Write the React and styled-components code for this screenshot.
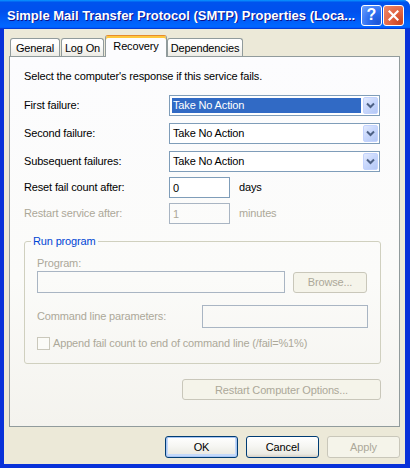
import React from 'react';
import styled, { createGlobalStyle, css } from 'styled-components';

const Global = createGlobalStyle`
  html, body { margin: 0; padding: 0; background: #ffffff; }
  body {
    width: 410px; height: 468px; overflow: hidden;
    font-family: "Liberation Sans", Arial, sans-serif;
    font-size: 11px; letter-spacing: -0.15px; color: #000;
  }
  * { box-sizing: border-box; }
`;

const Window = styled.div`
  width: 410px; height: 468px;
  display: flex; flex-direction: column;
  background: #0831d9;
  border-radius: 0 7px 0 0;
  overflow: hidden;
`;

const TitleBar = styled.div`
  height: 29px; flex: none;
  display: flex; align-items: center;
  padding: 0 6px 0 7px;
  background: linear-gradient(180deg, #0997ff, #0053ee 8%, #0050ee 40%, #06f 88%, #06f 93%, #005bff 95%, #003dd7 96%, #003dd7);
`;

const Title = styled.div`
  flex: 1; white-space: nowrap; overflow: hidden;
  font-weight: bold; font-size: 13px; letter-spacing: 0;
  color: #fff; text-shadow: 1px 1px #0f1089;
  padding-top: 1px;
`;

const TitleButtons = styled.div`
  display: flex; gap: 1px; margin-top: 1px;
`;

const TitleButton = styled.div`
  width: 21px; height: 21px;
  border: 1px solid #fff; border-radius: 3px;
  display: flex; align-items: center; justify-content: center;
  color: #fff; font-weight: bold; font-size: 16px; letter-spacing: 0;
  ${p => p.$kind === 'close' ? css`
    background: radial-gradient(circle at 85% 85%, #cc4622 0%, #e0603d 40%, #ec8a6c 100%);
  ` : css`
    background: radial-gradient(circle at 85% 85%, #1c55d8 0%, #2d6ef0 45%, #6fa3ff 100%);
  `}
`;

const Body = styled.div`
  flex: 1;
  display: flex; flex-direction: column;
  background: #ece9d8;
  margin: 0 5px 4px 4px;
  padding: 6px 5px 6px 5px;
`;

const TabStrip = styled.div`
  height: 21px; flex: none;
  display: flex; align-items: flex-end;
  padding-left: 1px;
  position: relative; z-index: 1;
`;

const Tab = styled.div`
  width: ${p => p.$w}px;
  height: 18px;
  margin-right: 1px;
  border: 1px solid #919b9c; border-bottom: none;
  border-radius: 3px 3px 0 0;
  background: linear-gradient(180deg, #ffffff 0%, #fefefd 30%, #ecebe5 100%);
  display: flex; align-items: center; justify-content: center;
  padding-top: 1px;
  ${p => p.$active && css`
    height: 22px;
    margin-right: 0;
    margin-bottom: -1px;
    background: #fcfcfe;
    border-top: 1px solid #e68b2c;
    box-shadow: inset 0 2px 0 #ffc73c;
    align-items: flex-start;
    padding-top: 4px;
  `}
`;

const Panel = styled.div`
  flex: 1;
  display: flex; flex-direction: column;
  border: 1px solid #919b9c;
  background: linear-gradient(180deg, #fcfcfe 0%, #fbfbf9 60%, #f4f3ee 100%);
  padding: 13px 18px 0 14px;
`;

const Text = styled.div`
  line-height: 13px;
  white-space: nowrap;
  color: ${p => p.$disabled ? '#aca899' : '#000'};
`;

const Row = styled.div`
  display: flex; align-items: center;
  margin-top: ${p => p.$mt || 0}px;
`;

const RowLabel = styled(Text)`
  width: ${p => p.$w || 145}px; flex: none;
`;

const Combo = styled.div`
  width: 211px; height: 21px;
  border: 1px solid #7f9db9; background: #fff;
  display: flex; align-items: center;
  padding: 1px;
`;

const ComboValue = styled.div`
  flex: 1; height: 15px;
  margin: 0 2px 0 1px;
  padding-left: 1px;
  line-height: 15px;
  ${p => p.$selected ? css`
    background: #316ac5; color: #fff;
  ` : css`
    color: #000;
  `}
`;

const ComboButton = styled.div`
  width: 15px; height: 17px; flex: none;
  border: 1px solid #c3d3fd; border-radius: 2px;
  background: linear-gradient(135deg, #e3ebfe 0%, #c9d8fc 45%, #b4c8f6 100%);
  display: flex; align-items: center; justify-content: center;
`;

const TextBox = styled.div`
  width: ${p => p.$w}px; height: ${p => p.$h || 21}px; flex: none;
  border: 1px solid ${p => p.$disabled ? '#a9b5c3' : '#7f9db9'};
  background: ${p => p.$disabled ? 'transparent' : '#fff'};
  color: ${p => p.$disabled ? '#aca899' : '#000'};
  padding: 0 3px;
  display: flex; align-items: center;
`;

const Unit = styled(Text)`
  margin-left: 9px;
`;

const Group = styled.fieldset`
  margin: 10px 0 0 0;
  padding: 0;
  min-inline-size: 0;
  border: 1px solid #d0d0bf;
  border-radius: 3px;
`;

const Legend = styled.legend`
  margin-left: 6px;
  padding: 0 2px;
  line-height: 14px;
  color: #0046d5;
`;

const GroupInner = styled.div`
  display: flex; flex-direction: column;
  padding: 9px 12px 13px 12px;
`;

const Button = styled.div`
  width: ${p => p.$w}px; height: ${p => p.$h || 22}px; flex: none;
  border-radius: 3px;
  display: flex; align-items: center; justify-content: center;
  white-space: nowrap;
  ${p => p.$disabled ? css`
    border: 1px solid #c9c7ba;
    background: #f5f4ea;
    color: #aca899;
  ` : css`
    border: 1px solid #003c74;
    background: linear-gradient(180deg, #ffffff 0%, #f6f6f3 45%, #ebeae3 85%, #d6d0c5 100%);
    color: #000;
  `}
  ${p => p.$default && css`
    box-shadow: inset 0 0 0 1px #a8c6f3, inset 0 -1px 0 2px #c4d9fa;
  `}
`;

const Check = styled.div`
  width: 13px; height: 13px; flex: none;
  border: 1px solid #cac8bb;
  background: #fbfbf7;
  margin-right: 3px;
`;

const SideButton = styled(Button)`
  align-self: flex-end;
  margin-top: 15px;
`;

const Footer = styled.div`
  display: flex; justify-content: flex-end; gap: 8px;
  margin-top: 9px;
`;

const Chevron = () => (
  <svg width="9" height="7" viewBox="0 0 9 7">
    <path d="M1 1.5 L4.5 5 L8 1.5" fill="none" stroke="#4d6185" strokeWidth="2" />
  </svg>
);

const CloseX = () => (
  <svg width="11" height="11" viewBox="0 0 11 11">
    <path d="M1.5 1.5 L9.5 9.5 M9.5 1.5 L1.5 9.5" stroke="#fff" strokeWidth="2.2" strokeLinecap="square" />
  </svg>
);

const ComboField = ({ value, selected }) => (
  <Combo>
    <ComboValue $selected={selected}>{value}</ComboValue>
    <ComboButton><Chevron /></ComboButton>
  </Combo>
);

export default function App() {
  return (
    <>
      <Global />
      <Window>
        <TitleBar>
          <Title>Simple Mail Transfer Protocol (SMTP) Properties (Loca...</Title>
          <TitleButtons>
            <TitleButton $kind="help">?</TitleButton>
            <TitleButton $kind="close"><CloseX /></TitleButton>
          </TitleButtons>
        </TitleBar>
        <Body>
          <TabStrip>
            <Tab $w={50}>General</Tab>
            <Tab $w={43}>Log On</Tab>
            <Tab $w={62} $active>Recovery</Tab>
            <Tab $w={76}>Dependencies</Tab>
          </TabStrip>
          <Panel>
            <Text>Select the computer's response if this service fails.</Text>
            <Row $mt={12}>
              <RowLabel>First failure:</RowLabel>
              <ComboField value="Take No Action" selected />
            </Row>
            <Row $mt={7}>
              <RowLabel>Second failure:</RowLabel>
              <ComboField value="Take No Action" />
            </Row>
            <Row $mt={7}>
              <RowLabel>Subsequent failures:</RowLabel>
              <ComboField value="Take No Action" />
            </Row>
            <Row $mt={5}>
              <RowLabel>Reset fail count after:</RowLabel>
              <TextBox $w={61}>0</TextBox>
              <Unit>days</Unit>
            </Row>
            <Row $mt={5}>
              <RowLabel $disabled>Restart service after:</RowLabel>
              <TextBox $w={61} $disabled>1</TextBox>
              <Unit $disabled>minutes</Unit>
            </Row>
            <Group>
              <Legend>Run program</Legend>
              <GroupInner>
                <Text $disabled>Program:</Text>
                <Row $mt={1}>
                  <TextBox $w={248} $h={22} $disabled />
                  <Button $w={74} $h={21} $disabled style={{ marginLeft: 8 }}>Browse...</Button>
                </Row>
                <Row $mt={12}>
                  <RowLabel $w={165} $disabled>Command line parameters:</RowLabel>
                  <TextBox $w={166} $h={23} $disabled />
                </Row>
                <Row $mt={9}>
                  <Check />
                  <Text $disabled>Append fail count to end of command line (/fail=%1%)</Text>
                </Row>
              </GroupInner>
            </Group>
            <SideButton $w={199} $h={21} $disabled>Restart Computer Options...</SideButton>
          </Panel>
          <Footer>
            <Button $w={73} $default>OK</Button>
            <Button $w={73}>Cancel</Button>
            <Button $w={73} $disabled>Apply</Button>
          </Footer>
        </Body>
      </Window>
    </>
  );
}
